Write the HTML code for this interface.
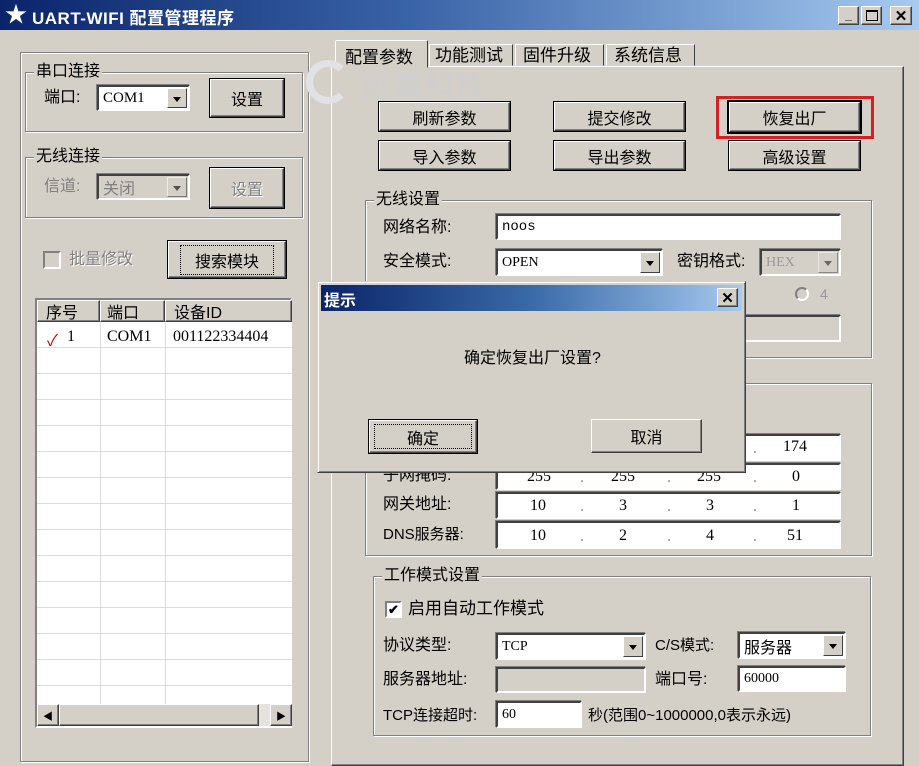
<!DOCTYPE html>
<html><head><meta charset="utf-8">
<style>
*{box-sizing:border-box;margin:0;padding:0}
body{width:919px;height:750px;overflow:hidden;background:#d4d0c8;font-family:"Liberation Sans","Noto Sans CJK SC","WenQuanYi Zen Hei",sans-serif;font-size:16px;color:#000;position:relative}
.a{position:absolute}
.btn{position:absolute;background:#d4d0c8;border:1px solid;border-color:#fff #404040 #404040 #fff;box-shadow:inset -1px -1px 0 #808080,0 0 0 1px #000;display:flex;align-items:center;justify-content:center;font-size:16px}
.grp{position:absolute;border:1px solid #808080;box-shadow:1px 1px 0 #fff,inset 1px 1px 0 #fff}
.gl{position:absolute;background:#d4d0c8;padding:0 2px;font-size:16px;top:-11px;left:8px;line-height:20px}
.inp{position:absolute;background:#fff;border:2px solid;border-color:#404040 #fff #fff #404040;box-shadow:-1px -1px 0 #808080;font-family:"Liberation Mono",monospace;font-size:14px;padding-left:4px;display:flex;align-items:center}
.dis{background:#d4d0c8}
.dd{position:absolute;right:1px;top:1px;bottom:1px;width:20px;background:#d4d0c8;border:1px solid;border-color:#fff #404040 #404040 #fff}
.dd:after{content:"";position:absolute;left:5px;top:8px;border:4px solid transparent;border-top:5px solid #000;border-bottom:0}
.lbl{position:absolute;font-size:16px;line-height:20px}
.ip{position:absolute;font-family:"Liberation Serif",serif;font-size:16px}
</style></head><body>
<div class="a" style="left:0;top:0;width:919px;height:30px;background:linear-gradient(90deg,#0a246a 0%,#3a64a8 45%,#a6caf0 100%)"></div>
<div class="a" style="left:5px;top:3px;color:#fff;font-size:22px;line-height:24px">★</div>
<div class="a" style="left:32px;top:4px;color:#fff;font-weight:bold;font-size:17px;letter-spacing:0.5px">UART-WIFI 配置管理程序</div>
<div class="btn" style="left:838px;top:6px;width:21px;height:19px;box-shadow:inset -1px -1px 0 #808080;font-weight:bold;align-items:flex-end;padding-bottom:2px;font-size:12px">_</div>
<div class="btn" style="left:861px;top:6px;width:21px;height:19px;box-shadow:inset -1px -1px 0 #808080"><div style="width:12px;height:11px;border:1px solid #000;border-top-width:2px"></div></div>
<div class="btn" style="left:890px;top:6px;width:22px;height:19px;box-shadow:inset -1px -1px 0 #808080;font-weight:bold;font-size:15px">✕</div>

<div class="grp" style="left:20px;top:52px;width:289px;height:710px"></div>
<div class="grp" style="left:25px;top:72px;width:278px;height:60px"><div class="gl">串口连接</div></div>
<div class="lbl" style="left:44px;top:88px">端口:</div>
<div class="inp" style="left:97px;top:85px;width:93px;height:26px;font-family:'Liberation Serif',serif;font-size:15px">COM1<div class="dd"></div></div>
<div class="btn" style="left:210px;top:79px;width:74px;height:38px">设置</div>

<div class="grp" style="left:25px;top:157px;width:278px;height:61px"><div class="gl">无线连接</div></div>
<div class="lbl" style="left:44px;top:177px;color:#808080">信道:</div>
<div class="inp dis" style="left:97px;top:174px;width:93px;height:26px;color:#808080;font-family:inherit;font-size:16px">关闭<div class="dd" style="opacity:.6"></div></div>
<div class="btn" style="left:210px;top:168px;width:74px;height:40px;color:#808080;text-shadow:1px 1px 0 #fff">设置</div>

<div class="a" style="left:43px;top:251px;width:18px;height:18px;border:2px solid;border-color:#808080 #fff #fff #808080"></div>
<div class="lbl" style="left:69px;top:250px;color:#808080;text-shadow:1px 1px 0 #fff">批量修改</div>
<div class="btn" style="left:168px;top:241px;width:118px;height:37px"><div style="border:1px dotted #000;padding:2px 14px">搜索模块</div></div>

<div class="a" style="left:35px;top:298px;width:257px;height:430px;background:#fff;border:2px solid;border-color:#808080 #fff #fff #808080">
 <div class="a" style="left:0;top:0;width:255px;height:22px;background:#d4d0c8"></div>
 <div class="btn" style="left:0;top:0;width:63px;height:22px;box-shadow:inset -1px -1px 0 #808080;justify-content:flex-start;padding-left:8px">序号</div>
 <div class="btn" style="left:63px;top:0;width:65px;height:22px;box-shadow:inset -1px -1px 0 #808080;justify-content:flex-start;padding-left:6px">端口</div>
 <div class="btn" style="left:128px;top:0;width:127px;height:22px;box-shadow:inset -1px -1px 0 #808080;justify-content:flex-start;padding-left:8px">设备ID</div>
 <div class="a" style="left:63px;top:22px;width:1px;height:382px;background:#ddd"></div>
 <div class="a" style="left:128px;top:22px;width:1px;height:382px;background:#ddd"></div>
 <div class="a" style="left:0;top:22px;width:255px;height:382px;background:repeating-linear-gradient(180deg,transparent 0,transparent 25px,#ddd 25px,#ddd 26px)"></div>
 <div class="a" style="left:10px;top:27px;color:#c00;font-size:16px">✓</div>
 <div class="ip" style="left:30px;top:28px">1</div>
 <div class="ip" style="left:70px;top:28px">COM1</div>
 <div class="ip" style="left:136px;top:28px">001122334404</div>
 <div class="a" style="left:0;top:404px;width:255px;height:22px;background:#e6e3de"></div>
 <div class="btn" style="left:0;top:404px;width:22px;height:22px;box-shadow:inset -1px -1px 0 #808080;font-size:10px">◀</div>
 <div class="btn" style="left:22px;top:404px;width:200px;height:22px;box-shadow:inset -1px -1px 0 #808080"></div>
 <div class="btn" style="left:233px;top:404px;width:22px;height:22px;box-shadow:inset -1px -1px 0 #808080;font-size:10px">▶</div>
</div>

<div class="a" style="left:331px;top:66px;width:573px;height:700px;border:1px solid;border-color:#fff #404040 #404040 #fff;box-shadow:inset -1px -1px 0 #808080"></div>
<div class="a" style="left:335px;top:40px;width:93px;height:28px;background:#d4d0c8;border:1px solid;border-color:#fff #404040 transparent #fff;border-radius:2px 2px 0 0;padding:2px 0 0 9px;font-size:17px">配置参数</div>
<div class="a" style="left:429px;top:44px;width:84px;height:22px;border:1px solid;border-color:#fff #404040 transparent #fff;padding:0 0 0 5px;font-size:17px;line-height:22px">功能测试</div>
<div class="a" style="left:515px;top:44px;width:89px;height:22px;border:1px solid;border-color:#fff #404040 transparent #fff;padding:0 0 0 7px;font-size:17px;line-height:22px">固件升级</div>
<div class="a" style="left:606px;top:44px;width:89px;height:22px;border:1px solid;border-color:#fff #404040 transparent #fff;padding:0 0 0 7px;font-size:17px;line-height:22px">系统信息</div>
<div class="a" style="left:306px;top:60px;width:44px;height:44px;border-radius:50%;border:7px solid #e0e2e6;border-right-color:transparent"></div>
<div class="a" style="left:362px;top:62px;color:#cfcfd2;font-size:30px;letter-spacing:1px">远嘉科技</div>

<div class="btn" style="left:379px;top:102px;width:131px;height:29px">刷新参数</div>
<div class="btn" style="left:554px;top:102px;width:131px;height:29px">提交修改</div>
<div class="a" style="left:716px;top:96px;width:158px;height:43px;border:3px solid #d42020"></div>
<div class="btn" style="left:729px;top:102px;width:131px;height:30px;box-shadow:inset -1px -1px 0 #808080,0 0 0 2px #000">恢复出厂</div>
<div class="btn" style="left:379px;top:141px;width:131px;height:29px">导入参数</div>
<div class="btn" style="left:554px;top:141px;width:131px;height:29px">导出参数</div>
<div class="btn" style="left:729px;top:141px;width:131px;height:29px">高级设置</div>

<div class="grp" style="left:365px;top:200px;width:507px;height:158px"><div class="gl" style="left:8px">无线设置</div></div>
<div class="lbl" style="left:383px;top:218px">网络名称:</div>
<div class="inp" style="left:496px;top:214px;width:345px;height:26px">noos</div>
<div class="lbl" style="left:383px;top:252px">安全模式:</div>
<div class="inp" style="left:496px;top:249px;width:167px;height:27px;font-family:'Liberation Serif',serif">OPEN<div class="dd"></div></div>
<div class="lbl" style="left:677px;top:252px">密钥格式:</div>
<div class="inp dis" style="left:760px;top:249px;width:81px;height:27px;color:#999;font-family:'Liberation Serif',serif">HEX<div class="dd" style="opacity:.5"></div></div>
<div class="a" style="left:795px;top:287px;width:14px;height:14px;border-radius:50%;border:2px solid;border-color:#808080 #fff #fff #808080"></div>
<div class="a" style="left:820px;top:286px;color:#999;font-size:14px">4</div>
<div class="inp dis" style="left:496px;top:315px;width:345px;height:27px"></div>

<div class="grp" style="left:365px;top:383px;width:507px;height:173px"></div>
<div class="lbl" style="left:383px;top:466px">子网掩码:</div>
<div class="lbl" style="left:383px;top:495px">网关地址:</div>
<div class="lbl" style="left:383px;top:525px;font-size:15px">DNS服务器:</div>
<div class="inp" style="left:496px;top:434px;width:345px;height:27px"></div>
<div class="inp" style="left:496px;top:463px;width:345px;height:27px"></div>
<div class="inp" style="left:496px;top:492px;width:345px;height:27px"></div>
<div class="inp" style="left:496px;top:521px;width:345px;height:28px"></div>
<div class="ip" style="left:783px;top:438px">174</div>
<div class="ip" style="left:527px;top:468px">255</div><div class="ip" style="left:611px;top:468px">255</div><div class="ip" style="left:697px;top:468px">255</div><div class="ip" style="left:792px;top:468px">0</div>
<div class="ip" style="left:530px;top:497px">10</div><div class="ip" style="left:619px;top:497px">3</div><div class="ip" style="left:706px;top:497px">3</div><div class="ip" style="left:792px;top:497px">1</div>
<div class="ip" style="left:530px;top:527px">10</div><div class="ip" style="left:619px;top:527px">2</div><div class="ip" style="left:706px;top:527px">4</div><div class="ip" style="left:787px;top:527px">51</div>
<div class="ip" style="left:580px;top:498px;color:#888">.</div><div class="ip" style="left:667px;top:498px;color:#888">.</div><div class="ip" style="left:753px;top:498px;color:#888">.</div>
<div class="ip" style="left:580px;top:528px;color:#888">.</div><div class="ip" style="left:667px;top:528px;color:#888">.</div><div class="ip" style="left:753px;top:528px;color:#888">.</div>
<div class="ip" style="left:580px;top:469px;color:#888">.</div><div class="ip" style="left:667px;top:469px;color:#888">.</div><div class="ip" style="left:753px;top:469px;color:#888">.</div>
<div class="ip" style="left:753px;top:440px;color:#888">.</div>

<div class="grp" style="left:373px;top:576px;width:498px;height:160px"><div class="gl">工作模式设置</div></div>
<div class="a" style="left:385px;top:601px;width:17px;height:17px;background:#fff;border:2px solid;border-color:#808080 #fff #fff #808080;font-size:13px;line-height:13px;text-align:center;font-weight:bold">✔</div>
<div class="lbl" style="left:408px;top:599px;font-size:17px">启用自动工作模式</div>
<div class="lbl" style="left:383px;top:636px">协议类型:</div>
<div class="inp" style="left:496px;top:633px;width:150px;height:27px;font-family:'Liberation Serif',serif">TCP<div class="dd"></div></div>
<div class="lbl" style="left:655px;top:636px;font-size:15px">C/S模式:</div>
<div class="inp" style="left:738px;top:632px;width:108px;height:27px;font-family:inherit;font-size:16px">服务器<div class="dd"></div></div>
<div class="lbl" style="left:383px;top:670px">服务器地址:</div>
<div class="inp dis" style="left:496px;top:667px;width:150px;height:26px"></div>
<div class="lbl" style="left:655px;top:670px">端口号:</div>
<div class="inp" style="left:738px;top:666px;width:108px;height:26px;font-family:'Liberation Serif',serif">60000</div>
<div class="lbl" style="left:383px;top:706px;font-size:15px">TCP连接超时:</div>
<div class="inp" style="left:496px;top:701px;width:86px;height:27px;font-family:'Liberation Serif',serif">60</div>
<div class="lbl" style="left:588px;top:706px;font-size:15px">秒(范围0~1000000,0表示永远)</div>

<div class="a" style="left:317px;top:281px;width:429px;height:192px;background:#d4d0c8;border:1px solid;border-color:#d4d0c8 #404040 #404040 #d4d0c8;box-shadow:inset 1px 1px 0 #fff,inset -1px -1px 0 #808080">
 <div class="a" style="left:3px;top:3px;width:421px;height:26px;background:linear-gradient(90deg,#0a246a 0%,#3a6aa8 50%,#a6caf0 100%)"></div>
 <div class="a" style="left:6px;top:5px;color:#fff;font-weight:bold;font-size:16px">提示</div>
 <div class="btn" style="left:399px;top:6px;width:21px;height:19px;box-shadow:inset -1px -1px 0 #808080;font-weight:bold;font-size:15px">✕</div>
 <div class="a" style="left:0;top:62px;width:429px;text-align:center;font-size:16px">确定恢复出厂设置?</div>
 <div class="btn" style="left:51px;top:138px;width:108px;height:33px"><div style="border:1px dotted #000;width:98px;height:25px;display:flex;align-items:center;justify-content:center">确定</div></div>
 <div class="btn" style="left:273px;top:137px;width:111px;height:34px;box-shadow:inset -1px -1px 0 #808080">取消</div>
</div>
</body></html>
